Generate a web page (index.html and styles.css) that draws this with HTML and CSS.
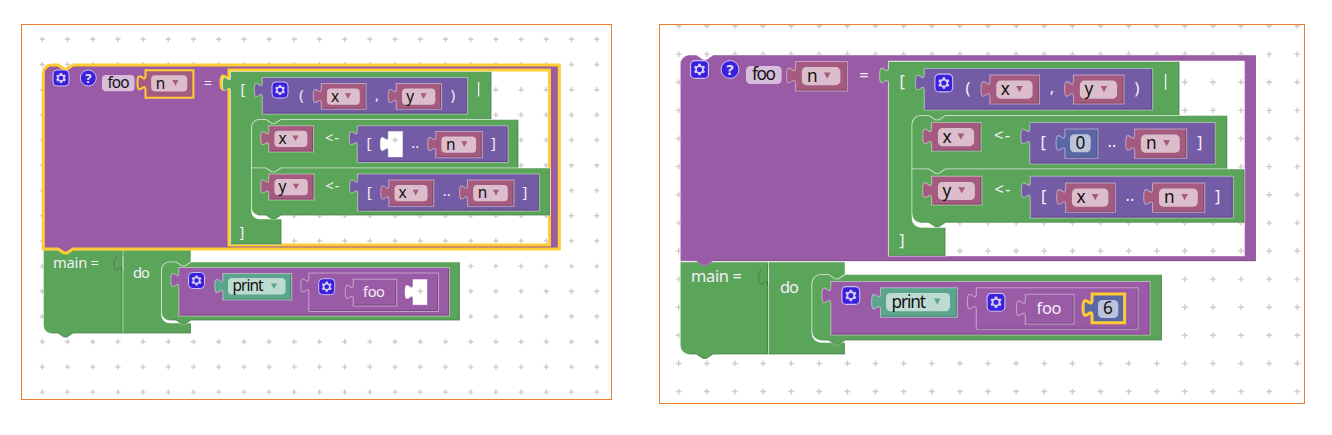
FILE: index.html
```html
<!DOCTYPE html>
<html lang="en">
<head>
<meta charset="utf-8">
<title>Block workspaces</title>
<link rel="stylesheet" href="styles.css">
</head>
<body>
<svg class="defs" aria-hidden="true">
  <symbol id="gear" viewBox="-1 -1 18 18">
    <rect class="icon-bg" width="16" height="16" rx="4"/>
    <path class="icon-mark" fill-rule="evenodd" d="m4.203,7.296 0,1.368 -0.92,0.677 -0.11,0.41 0.9,1.559 0.41,0.11 1.043,-0.457 1.187,0.683 0.127,1.134 0.3,0.3 1.8,0 0.3,-0.299 0.127,-1.138 1.185,-0.682 1.046,0.458 0.409,-0.11 0.9,-1.559 -0.11,-0.41 -0.92,-0.677 0,-1.366 0.92,-0.677 0.11,-0.41 -0.9,-1.559 -0.409,-0.109 -1.046,0.458 -1.185,-0.682 -0.127,-1.138 -0.3,-0.299 -1.8,0 -0.3,0.3 -0.126,1.135 -1.187,0.682 -1.043,-0.457 -0.41,0.11 -0.899,1.559 0.108,0.409z M10.3,8a2.3,2.3 0 1 0 -4.6,0a2.3,2.3 0 1 0 4.6,0z"/>
  </symbol>
</svg>
<main class="boards">
  <section class="board board-a"><svg id="a" viewBox="22 25 589 374"></svg></section>
  <section class="board board-b"><svg id="b" viewBox="660 25 644 378"></svg></section>
</main>
<script src="blocks.js"></script>
</body>
</html>
```
FILE: styles.css
```css
body {
  margin: 0;
  background: #fff;
}
.defs {
  position: absolute;
  width: 0;
  height: 0;
}
.boards {
  display: flex;
  align-items: flex-start;
  gap: 47px;
  padding: 24px 0 0 21px;
}
.board {
  box-sizing: border-box;
  border: 1px solid #ed7d31;
  background: #fff;
}
.board svg { display: block; width: 100%; height: 100%; }
.board-a { width: 591px; height: 376px; font-size: 14.7px; }
.board-b { width: 646px; height: 380px; font-size: 16.4px; }

.grid { stroke: #ccc; stroke-width: 1.4; fill: none; }
.block { stroke: rgba(255, 255, 255, .42); stroke-width: 1.1; }
.shade { fill: none; stroke: rgba(0, 0, 0, .2); stroke-width: 1.1; }
.light { fill: none; stroke: rgba(255, 255, 255, .42); stroke-width: 1.1; }
.bar { fill: none; stroke: #f6eef8; stroke-width: 1.3; }
.purple { fill: #995ba5; }
.green { fill: #5ba55b; }
.violet { fill: #745ba5; }
.pink { fill: #a55b80; }
.teal { fill: #5ba58c; }
.blue { fill: #5b67a5; }
.hole { fill: #fff; }
.selected { stroke: #fc3; stroke-width: 3; }
.selected-thin { stroke: #fc3; stroke-width: 2; }
.field { fill: #fff; fill-opacity: .6; }
.icon-bg { fill: #3a20dd; stroke: #cdbfee; stroke-width: 1; }
.icon-mark { fill: #d6cdf4; }

text {
  font-family: "Noto Sans", "Open Sans", sans-serif;
  fill: #f6eef8;
}
.ink { fill: #111; font-size: 1.05em; }
.mid { text-anchor: middle; }
.help { fill: #e6e0fa; font-weight: 700; font-size: .9em; }
```
FILE: blocks.js
```js
function board(id, k) {
  const svg = document.getElementById(id);
  const add = (tag, cls, attrs, text) => {
    const e = document.createElementNS('http://www.w3.org/2000/svg', tag);
    if (cls) e.setAttribute('class', cls);
    for (const n in attrs) e.setAttribute(n, attrs[n]);
    if (text) e.textContent = text;
    svg.append(e);
  };
  const path = (cls, d) => add('path', cls, { d });
  // Puzzle tab, drawn upward along the left edge of a value block.
  const tab = y => `V${y + 20 * k}c0,${-10 * k} ${-8 * k},${8 * k} ${-8 * k},${-7.5 * k}s${8 * k},${2.5 * k} ${8 * k},${-7.5 * k}`;
  const notch = `l${6 * k},${4 * k}h${3 * k}l${6 * k},${-4 * k}`;
  const nub = `l${-6 * k},${4 * k}h${-3 * k}l${-6 * k},${-4 * k}`;
  const value = (cls, x, y, r, b) => {
    path('block ' + cls, `M${x},${y}H${r}V${b}H${x}${tab(y)}z`);
    if (!/hole|selected/.test(cls)) path('shade', `M${x + 1},${b - 1}H${r - 1}V${y + 1}`);
  };
  const text = (s, x, y, w, cls = '') => add('text', w ? cls : cls + ' mid',
    w ? { x, y, textLength: w } : { x, y }, s);
  const field = (x, y, r, b) => add('rect', 'field', { x, y, width: r - x, height: b - y, rx: 4 * k });
  const arrow = (color, x, y) => path(color, `M${x - 3 * k},${y - 2.6 * k}h${6 * k}l${-3 * k},${5.6 * k}z`);
  const gear = (x, y) => add('use', '', { href: '#gear', x: x - 9 * k, y: y - 9 * k, width: 18 * k, height: 18 * k });
  const help = (x, y) => {
    add('circle', 'icon-bg', { cx: x, cy: y, r: 8 * k });
    text('?', x, y + 4.8 * k, 0, 'help');
  };
  // Variable block with its dropdown.
  const variable = (s, x, y, r, b, cls = '') => {
    value('pink ' + cls, x, y, r, b);
    field(x + 5.7 * k, y + 5 * k, r - 6.2 * k, y + 21.2 * k);
    text(s, x + (s === 'n' ? 15 : 13.8) * k, y + 18.2 * k, 0, 'ink');
    arrow('pink', r - 18 * k, y + 12.4 * k);
  };
  const grid = (x0, y0, step, cols, rows) => {
    let d = '';
    for (let i = 0; i < cols; i++) for (let j = 0; j < rows; j++)
      d += `M${x0 + i * step - 2.6 * k},${y0 + j * step}h${5.2 * k}m${-2.6 * k},${-2.6 * k}v${5.2 * k}`;
    path('grid', d);
  };
  return { path, tab, notch, nub, value, text, field, arrow, gear, help, variable, grid };
}

function left() {
  const { path, tab, notch, nub, value, text, field, arrow, gear, help, variable, grid } = board('a', 1);
  grid(42.3, 39.3, 25.2, 23, 15);

  // main = do
  path('block green', `M43.5,250H123V333.5H73${nub}H51.5a8,8 0 0 1 -8,-8z`);
  path('block green', `M123,250H191V262H191${nub}H169.5a8,8 0 0 0 -8,8V315a8,8 0 0 0 8,8H191V333.5H123z`);
  path('shade', 'M52,333H58l6,4h3l6,-4H190.5V323.5M122,251V333');
  path('light', `M123,271V256`);
  path('shade', `M122,271c0,-10 -8,8 -8,-7.5c0,-3 1,-5 3,-6`);
  path('block green', `M169.5,262H176${notch}H460V320.5H191${nub}H169.5a8,8 0 0 1 -8,-8V270a8,8 0 0 1 8,-8z`);
  path('shade', 'M170,320H176l6,4h3l6,-4H459.3V263');
  text('main =', 53, 268.3, 46);
  text('do', 133, 278, 17);
  value('purple', 178.8, 267.5, 449.5, 316);
  gear(196.5, 280.5);
  value('teal', 222.8, 273.5, 291.7, 300);
  field(228, 278, 285.5, 294.5);
  text('print', 232.5, 291, 31, 'ink');
  arrow('teal', 274, 286);
  value('purple', 308.8, 273, 438.5, 311.5);
  gear(326.7, 286.7);
  value('purple', 353.3, 279.3, 396.7, 306);
  text('foo', 363, 297, 22);
  value('hole', 413, 279.5, 427, 304.8);
  path('grid', 'M417.7,291.3h5.4m-2.7,-2.7v5.4');

  // foo n =
  path('block purple selected', `M51.3,65H58${notch}H559.3V249H73${nub}H43.3V73a8,8 0 0 1 8,-8zM229,70V75c0,10 -8,-8 -8,7.5s8,-2.5 8,7.5V245H549.5V70z`);
  gear(61, 78);
  help(88.3, 78);
  field(102, 75, 134.5, 91.3);
  text('foo', 107.5, 88, 22, 'ink');
  variable('n', 145.5, 70.3, 193.4, 97.7, 'selected-thin');
  text('=', 208, 88);

  // List comprehension
  path('block green', `M230.5,71.5H491.5V119.5H281${nub}H259.5a8,8 0 0 0 -8,8V211a8,8 0 0 0 8,8H281.5V244.5H230.5${tab(71.5)}z`);
  path('shade', 'M491,72V119M231,244H281V220');
  path('block green', `M259.5,119.5H266${notch}H518.5V168H281${nub}H251.5V127.5a8,8 0 0 1 8,-8z`);
  path('shade', 'M518,120.5V168');
  path('block green', `M251.5,168H266${notch}H550V215.5H281${nub}H259.5a8,8 0 0 1 -8,-8z`);
  path('shade', 'M258,215H266l6,4h3l6,-4H549.4V169');
  text('[', 243, 94);
  text(']', 242, 237);
  value('violet', 262.3, 77.5, 467.3, 114);
  gear(280, 90);
  text('(', 301.5, 100);
  variable('x', 321.3, 83.5, 366, 109.3);
  text(',', 377, 100);
  variable('y', 396.3, 83.5, 441.5, 109.3);
  text(')', 453, 100);
  path('bar', 'M478.6,82V96.5');

  variable('x', 268.7, 125.7, 313.5, 152);
  text('<-', 325, 142.5, 14);
  value('violet', 357.3, 125.7, 508, 162.5);
  text('[', 369, 148);
  value('hole', 388.3, 131.5, 402.5, 157);
  path('grid', 'M392.5,140h5.4m-2.7,-2.7v5.4');
  text('..', 415.3, 147.5);
  variable('n', 435.7, 131.5, 482.3, 157.8);
  text(']', 493.5, 148);

  variable('y', 268.7, 174, 314, 200);
  text('<-', 325.5, 191, 14);
  value('violet', 357.6, 174, 539.3, 211);
  text('[', 369.5, 197);
  variable('x', 388.8, 180, 433.7, 206.3);
  text('..', 446.7, 196);
  variable('n', 467.5, 180, 514, 206.3);
  text(']', 525, 197);
}

function right() {
  const { path, tab, notch, nub, value, text, field, arrow, gear, help, variable, grid } = board('b', 1.115);
  grid(678.7, 26, 28.12, 23, 14);

  // main = do
  path('block green', `M680.3,262H768.5V354.5H713${nub}H689.3a9,9 0 0 1 -9,-9z`);
  path('block green', `M768.5,262H845V274.5H845${nub}H821a9,9 0 0 0 -9,9V333.5a9,9 0 0 0 9,9H845V354.5H768.5z`);
  path('shade', 'M689,354H696.3l6.7,4.4h3.3l6.7,-4.4H844.5V343M767.5,263V354');
  path('light', 'M768.5,284V268');
  path('shade', 'M767.5,285c0,-11 -9,9 -9,-8.4c0,-3 1,-5.5 3.3,-7');
  path('block green', `M821,274.5H828.5${notch}H1162V340.5H845.2${nub}H821a9,9 0 0 1 -9,-9V283.5a9,9 0 0 1 9,-9z`);
  path('shade', 'M821,340H828.5l6.7,4.4h3.3l6.7,-4.4H1161.4V275.5');
  text('main =', 691, 282, 51);
  text('do', 780, 293, 19);
  value('purple', 830.8, 281.5, 1150, 335);
  gear(850.8, 295.5);
  value('teal', 880.5, 287.7, 957.3, 317.3);
  field(886, 293, 950, 311.3);
  text('print', 891.5, 307.5, 34.5, 'ink');
  arrow('teal', 937.3, 301.5);
  value('purple', 976.3, 287.7, 1138, 329.3);
  gear(996, 302.3);
  value('purple', 1025.3, 294.3, 1074, 324);
  text('foo', 1036.5, 313.7, 25);
  value('blue selected', 1092, 294, 1124.6, 322.8);
  field(1098, 300, 1118.3, 318);
  text('6', 1108, 314.3, 0, 'ink');

  // foo n =
  path('block purple', `M689.3,55H696.5${notch}H1256V261.3H713${nub}H680.3V64a9,9 0 0 1 9,-9zM888.5,61V256H1244.5V61z`);
  path('shade', 'M1255.3,56V260.5H714M697,262l6,4.2h3.3l6.4,-4.2');
  gear(699.5, 69.5);
  help(730, 69.5);
  field(746, 66, 781.7, 84);
  text('foo', 752, 80.3, 24, 'ink');
  variable('n', 795.5, 61.5, 847.3, 91);
  text('=', 864, 81);

  // List comprehension
  path('block green', `M888.5,61.5H1179.5V115.5H945.5${nub}H921a9,9 0 0 0 -9,9V218.5a9,9 0 0 0 9,9H945.5V256H888.5${tab(61.5)}z`);
  path('shade', 'M1179,62V115M889,255.5H945V228');
  path('block green', `M921,115.5H928.8${notch}H1227.3V169H945.5${nub}H912V124.5a9,9 0 0 1 9,-9z`);
  path('shade', 'M1226.7,116.5V169');
  path('block green', `M912,169H928.8${notch}H1244.7V222.8H945.5${nub}H921a9,9 0 0 1 -9,-9z`);
  path('shade', 'M920,222.3H928.8l6.7,4.4h3.3l6.7,-4.4H1244V170');
  text('[', 902.3, 86.5);
  text(']', 902, 246);
  value('violet', 924.3, 68.5, 1152.6, 110);
  gear(943.8, 83);
  text('(', 968, 94);
  variable('x', 989.9, 75, 1039.5, 104);
  text(',', 1052, 93);
  variable('y', 1073.5, 75, 1124, 104);
  text(')', 1137, 94);
  path('bar', 'M1165.6,74V90');

  variable('x', 931.6, 122.5, 981, 151);
  text('<-', 994, 141, 16);
  value('violet', 1029.8, 122.5, 1215, 164);
  text('[', 1043.3, 147.5);
  value('blue', 1065, 129, 1097.8, 158.3);
  field(1070, 134.3, 1090.7, 152.3);
  text('0', 1080.3, 149.3, 0, 'ink');
  text('..', 1112, 147);
  variable('n', 1134.6, 129, 1186.7, 158.3);
  text(']', 1199.7, 147.5);

  variable('y', 931.6, 176.3, 981.8, 205);
  text('<-', 994.5, 195, 16);
  value('violet', 1030.3, 176.3, 1233.3, 218);
  text('[', 1043.7, 201.5);
  variable('x', 1065.6, 183, 1115.3, 212.3);
  text('..', 1130, 201);
  variable('n', 1152.6, 183, 1204.7, 212.3);
  text(']', 1217.7, 201.5);
}

left();
right();
```
